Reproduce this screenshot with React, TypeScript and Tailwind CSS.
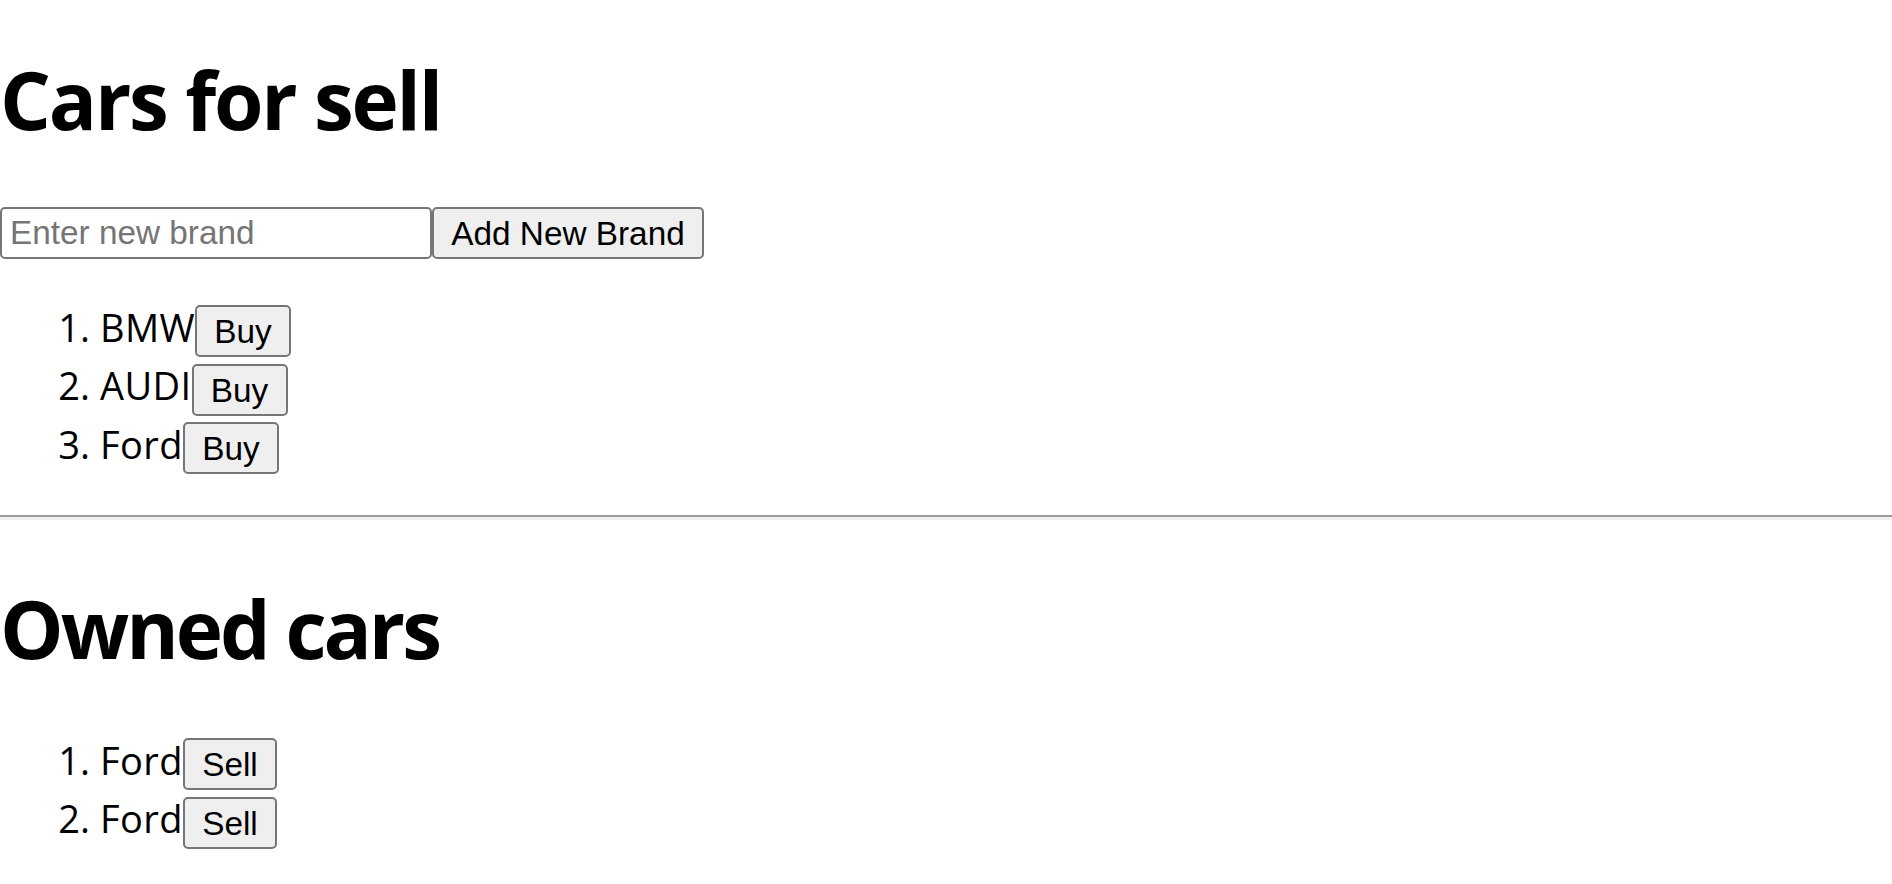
import React from "react";

const forSale = ["BMW", "AUDI", "Ford"];
const owned = ["Ford", "Ford"];

function Row({ n, label, action }: { n: number; label: string; action: string }) {
  return (
    <li className="flex items-start h-[58.65px]">
      <span className="block w-[100px] text-right pr-[10px] text-[38px] leading-[51.7px]">{n}.</span>
      <span className="block text-[38px] leading-[51.7px] tracking-[0.4px]">{label}</span>
      <button
        type="button"
        className="mt-[3.3px] h-[52px] px-[17.3px] border-2 border-[#767676] rounded-[5px] bg-[#efefef] text-black text-[33.33px] leading-[49px] font-['Liberation_Sans',Arial,sans-serif]"
      >
        {action}
      </button>
    </li>
  );
}

export default function App() {
  return (
    <div className="bg-white text-black font-['Open_Sans','Noto_Sans',sans-serif] w-[1892px] min-h-[884px]">
      <h1 className="pt-[58.7px] text-[80px] leading-[80px] font-bold tracking-[-2.2px]">Cars for sell</h1>
      <div className="mt-[68.3px] flex h-[52px]">
        <input
          type="text"
          placeholder="Enter new brand"
          className="w-[432px] h-[52px] border-2 border-[#767676] rounded-[5px] pl-[8px] text-[33.33px] font-['Liberation_Sans',Arial,sans-serif] placeholder:text-[#757575] outline-none"
        />
        <button
          type="button"
          className="h-[52px] px-[17.3px] border-2 border-[#767676] rounded-[5px] bg-[#efefef] text-black text-[33.33px] leading-[49px] font-['Liberation_Sans',Arial,sans-serif]"
        >
          Add New Brand
        </button>
      </div>
      <ol className="mt-[42.7px]">
        {forSale.map((c, i) => (
          <Row key={i} n={i + 1} label={c} action="Buy" />
        ))}
      </ol>
      <div className="mt-[37.1px]">
        <div className="h-[2.7px] bg-[#9a9a9a]" />
        <div className="h-[2.6px] bg-[#eeeeee]" />
      </div>
      <h1 className="mt-[67.7px] text-[80px] leading-[80px] font-bold tracking-[-3px]">Owned cars</h1>
      <ol className="mt-[67px]">
        {owned.map((c, i) => (
          <Row key={i} n={i + 1} label={c} action="Sell" />
        ))}
      </ol>
    </div>
  );
}
